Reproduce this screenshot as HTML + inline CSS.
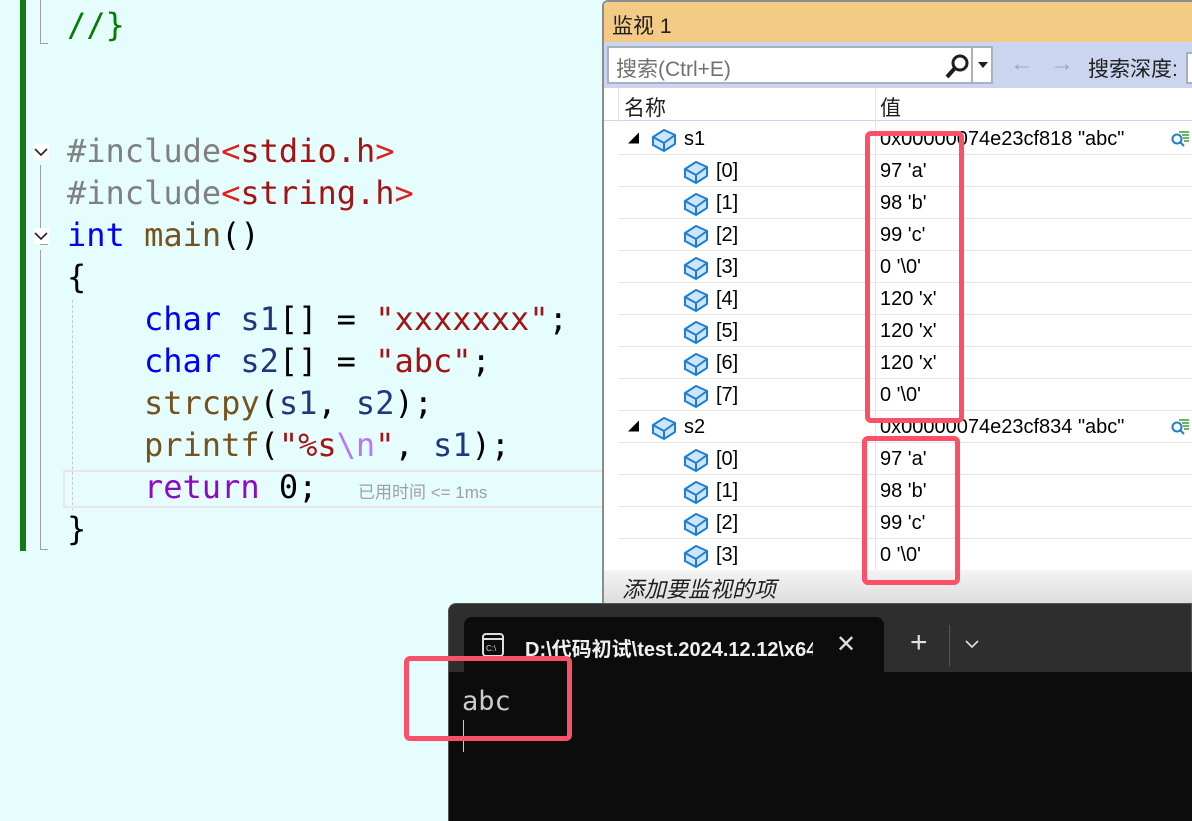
<!DOCTYPE html>
<html><head><meta charset="utf-8"><style>
*{margin:0;padding:0;box-sizing:border-box}
body{width:1192px;height:821px;overflow:hidden;position:relative;background:#e6fdfd;font-family:"Liberation Sans","Noto Sans CJK SC",sans-serif}
.a{position:absolute;white-space:pre}
.code{font-family:"DejaVu Sans Mono","Liberation Mono",monospace;font-size:32px;line-height:42px;height:42px}
.kw{color:#0000ff}.fn{color:#74531f}.str{color:#a31515}.pp{color:#808080}.inc{color:#e21f1f}.var{color:#1f377f}.cm{color:#008000}.ret{color:#8f08c4}.esc{color:#b776fb}
.row{position:absolute;left:618px;width:574px;height:32px;border-bottom:1px solid #e4e4e4;font-size:20px;line-height:32px}
.row span{position:absolute;top:0}
.red{position:absolute;border:5px solid #fa5068;border-radius:6px}
.fold{position:absolute;left:33px;width:16px;height:16px;background:#fff}
</style></head><body>
<div class="a" style="left:20px;top:0;width:6px;height:551px;background:#127b12"></div>
<div class="a" style="left:40px;top:0;width:1px;height:44px;background:#a0a0a0"></div>
<div class="a" style="left:40px;top:43px;width:8px;height:1px;background:#a0a0a0"></div>
<div class="a" style="left:40px;top:165px;width:1px;height:80px;background:#a0a0a0"></div>
<div class="a" style="left:40px;top:244px;width:8px;height:1px;background:#a0a0a0"></div>
<div class="a" style="left:40px;top:250px;width:1px;height:300px;background:#a0a0a0"></div>
<div class="a" style="left:40px;top:549px;width:8px;height:1px;background:#a0a0a0"></div>
<div class="a" style="left:72px;top:300px;width:0;height:210px;border-left:1px dashed #c8c8c8"></div>
<svg class="fold" style="top:144px" width="16" height="16"><path d="M2 5 L8 11 L14 5" fill="none" stroke="#222" stroke-width="1.6"/></svg>
<svg class="fold" style="top:228px" width="16" height="16"><path d="M2 5 L8 11 L14 5" fill="none" stroke="#222" stroke-width="1.6"/></svg>
<div class="a" style="left:63px;top:470px;width:545px;height:38px;border:2px solid #ece4ec"></div>
<div class="a code cm" style="left:67px;top:4px">//}</div>
<div class="a code" style="left:67px;top:130px"><span class="pp">#include</span><span class="inc">&lt;</span><span class="str">stdio.h</span><span class="inc">&gt;</span></div>
<div class="a code" style="left:67px;top:172px"><span class="pp">#include</span><span class="inc">&lt;</span><span class="str">string.h</span><span class="inc">&gt;</span></div>
<div class="a code" style="left:67px;top:214px"><span class="kw">int</span> <span class="fn">main</span>()</div>
<div class="a code" style="left:67px;top:256px">{</div>
<div class="a code" style="left:144px;top:298px"><span class="kw">char</span> <span class="var">s1</span>[] = <span class="str">"xxxxxxx"</span>;</div>
<div class="a code" style="left:144px;top:340px"><span class="kw">char</span> <span class="var">s2</span>[] = <span class="str">"abc"</span>;</div>
<div class="a code" style="left:144px;top:382px"><span class="fn">strcpy</span>(<span class="var">s1</span>, <span class="var">s2</span>);</div>
<div class="a code" style="left:144px;top:424px"><span class="fn">printf</span>(<span class="str">"%s</span><span class="esc">\n</span><span class="str">"</span>, <span class="var">s1</span>);</div>
<div class="a code" style="left:144px;top:466px"><span class="ret">return</span> 0;</div>
<div class="a" style="left:358px;top:478px;font-size:17px;color:#a0a0a0">已用时间 &lt;= 1ms</div>
<div class="a code" style="left:67px;top:508px">}</div>

<!-- watch panel -->
<div class="a" style="left:602px;top:0;width:590px;height:605px;background:#fff;border-left:2px solid #8c8c8c;border-top:2px solid #8c8c8c;border-radius:6px 0 0 0"></div>
<div class="a" style="left:604px;top:2px;width:588px;height:40px;background:#f4cb85;border-radius:5px 0 0 0"></div>
<div class="a" style="left:612px;top:10px;font-size:21px;color:#1e1e1e">监视 1</div>
<div class="a" style="left:604px;top:42px;width:588px;height:46px;background:#ccd5f0"></div>
<div class="a" style="left:607px;top:46px;width:386px;height:38px;background:#fff;border:2px solid #a9b0c0"></div>
<div class="a" style="left:616px;top:53px;font-size:21px;color:#707070">搜索(Ctrl+E)</div>
<svg class="a" style="left:942px;top:52px" width="30" height="28"><circle cx="18" cy="11" r="7" fill="none" stroke="#1e1e1e" stroke-width="3"/><line x1="13" y1="16" x2="5" y2="25" stroke="#1e1e1e" stroke-width="4"/></svg>
<div class="a" style="left:971px;top:48px;width:2px;height:34px;background:#a9b0c0"></div>
<div class="a" style="left:978px;top:62px;border:5px solid transparent;border-top:6px solid #1e1e1e"></div>
<div class="a" style="left:1010px;top:50px;font-size:24px;color:#a0a8b8">←</div>
<div class="a" style="left:1050px;top:50px;font-size:24px;color:#a0a8b8">→</div>
<div class="a" style="left:1088px;top:53px;font-size:21px;color:#1e1e1e">搜索深度:</div>
<div class="a" style="left:1186px;top:52px;width:10px;height:32px;background:#fff;border:2px solid #a9b0c0"></div>
<div class="a" style="left:604px;top:88px;width:588px;height:33px;background:#fff;border-bottom:1px solid #ccd5f0"></div>
<div class="a" style="left:618px;top:88px;width:1px;height:33px;background:#e4e4e4"></div>
<div class="a" style="left:875px;top:88px;width:1px;height:482px;background:#e4e4e4"></div>
<div class="a" style="left:624px;top:92px;font-size:21px;color:#1e1e1e">名称</div>
<div class="a" style="left:880px;top:92px;font-size:21px;color:#1e1e1e">值</div>

<svg width="0" height="0" style="position:absolute"><defs><g id="ic"><path d="M3 12 L14 5 L25 10 L25 19 L14 26 L3 20 Z" fill="#cfe5f7" stroke="#1a7fd0" stroke-width="2"/><path d="M3 12 L14 18 L25 10 M14 18 L14 26" fill="none" stroke="#1a7fd0" stroke-width="2"/></g>
<g id="mg"><circle cx="7" cy="10" r="4.5" fill="none" stroke="#1a7fd0" stroke-width="2"/><line x1="10" y1="13" x2="14" y2="17" stroke="#1a7fd0" stroke-width="2"/><path d="M9 3h10M12 6h7M13 9h6M14 12h5" stroke="#3a9a3a" stroke-width="1.5"/></g></defs></svg>

<div class="row" style="top:123px"><span style="left:10px;font-size:11px">◢</span><svg style="position:absolute;left:32px;top:2px" width="28" height="28"><use href="#ic"/></svg><span style="left:66px">s1</span><span style="left:262px">0x00000074e23cf818 "abc"</span><svg style="position:absolute;left:552px;top:6px" width="22" height="20"><use href="#mg"/></svg></div>
<div class="row" style="top:155px"><svg style="position:absolute;left:64px;top:2px" width="28" height="28"><use href="#ic"/></svg><span style="left:98px">[0]</span><span style="left:262px">97 'a'</span></div>
<div class="row" style="top:187px"><svg style="position:absolute;left:64px;top:2px" width="28" height="28"><use href="#ic"/></svg><span style="left:98px">[1]</span><span style="left:262px">98 'b'</span></div>
<div class="row" style="top:219px"><svg style="position:absolute;left:64px;top:2px" width="28" height="28"><use href="#ic"/></svg><span style="left:98px">[2]</span><span style="left:262px">99 'c'</span></div>
<div class="row" style="top:251px"><svg style="position:absolute;left:64px;top:2px" width="28" height="28"><use href="#ic"/></svg><span style="left:98px">[3]</span><span style="left:262px">0 '\0'</span></div>
<div class="row" style="top:283px"><svg style="position:absolute;left:64px;top:2px" width="28" height="28"><use href="#ic"/></svg><span style="left:98px">[4]</span><span style="left:262px">120 'x'</span></div>
<div class="row" style="top:315px"><svg style="position:absolute;left:64px;top:2px" width="28" height="28"><use href="#ic"/></svg><span style="left:98px">[5]</span><span style="left:262px">120 'x'</span></div>
<div class="row" style="top:347px"><svg style="position:absolute;left:64px;top:2px" width="28" height="28"><use href="#ic"/></svg><span style="left:98px">[6]</span><span style="left:262px">120 'x'</span></div>
<div class="row" style="top:379px"><svg style="position:absolute;left:64px;top:2px" width="28" height="28"><use href="#ic"/></svg><span style="left:98px">[7]</span><span style="left:262px">0 '\0'</span></div>
<div class="row" style="top:411px"><span style="left:10px;font-size:11px">◢</span><svg style="position:absolute;left:32px;top:2px" width="28" height="28"><use href="#ic"/></svg><span style="left:66px">s2</span><span style="left:262px">0x00000074e23cf834 "abc"</span><svg style="position:absolute;left:552px;top:6px" width="22" height="20"><use href="#mg"/></svg></div>
<div class="row" style="top:443px"><svg style="position:absolute;left:64px;top:2px" width="28" height="28"><use href="#ic"/></svg><span style="left:98px">[0]</span><span style="left:262px">97 'a'</span></div>
<div class="row" style="top:475px"><svg style="position:absolute;left:64px;top:2px" width="28" height="28"><use href="#ic"/></svg><span style="left:98px">[1]</span><span style="left:262px">98 'b'</span></div>
<div class="row" style="top:507px"><svg style="position:absolute;left:64px;top:2px" width="28" height="28"><use href="#ic"/></svg><span style="left:98px">[2]</span><span style="left:262px">99 'c'</span></div>
<div class="row" style="top:539px;border:none"><svg style="position:absolute;left:64px;top:2px" width="28" height="28"><use href="#ic"/></svg><span style="left:98px">[3]</span><span style="left:262px">0 '\0'</span></div>
<div class="a" style="left:604px;top:570px;width:588px;height:35px;background:linear-gradient(#f4f4f4,#dcdcdc)"></div>
<div class="a" style="left:622px;top:572px;font-size:22px;font-style:italic;color:#1e1e1e">添加要监视的项</div>

<!-- terminal -->
<div class="a" style="left:448px;top:603px;width:744px;height:218px;background:#2e2e2e;border-radius:8px 0 0 0;border:1px solid #555"></div>
<div class="a" style="left:449px;top:672px;width:743px;height:149px;background:#0c0c0c"></div>
<div class="a" style="left:464px;top:617px;width:420px;height:56px;background:#0c0c0c;border-radius:8px 8px 0 0"></div>
<svg class="a" style="left:481px;top:632px" width="26" height="26"><rect x="2" y="2" width="20" height="22" rx="3" fill="none" stroke="#ddd" stroke-width="2"/><line x1="2" y1="7" x2="22" y2="7" stroke="#ddd" stroke-width="2"/><text x="5" y="19" font-size="8" fill="#ddd" font-family="Liberation Sans">C:\</text></svg>
<div class="a" style="left:525px;top:633px;width:288px;overflow:hidden;font-size:20px;font-weight:bold;color:#f0f0f0">D:\代码初试\test.2024.12.12\x64</div>
<div class="a" style="left:836px;top:630px;font-size:24px;color:#e0e0e0">✕</div>
<div class="a" style="left:910px;top:626px;font-size:30px;color:#e0e0e0;font-weight:300">+</div>
<div class="a" style="left:949px;top:625px;width:1px;height:42px;background:#555"></div>
<svg class="a" style="left:964px;top:638px" width="16" height="12"><path d="M2 3 L8 9 L14 3" fill="none" stroke="#e0e0e0" stroke-width="1.6"/></svg>
<div class="a" style="left:462px;top:686px;font-family:'DejaVu Sans Mono',monospace;font-size:27px;color:#cccccc">abc</div>
<div class="a" style="left:463px;top:720px;width:1px;height:32px;background:#ccc"></div>

<div class="red" style="left:865px;top:131px;width:99px;height:292px"></div>
<div class="red" style="left:862px;top:436px;width:98px;height:149px"></div>
<div class="red" style="left:404px;top:656px;width:168px;height:85px;border-width:5px"></div>
</body></html>
